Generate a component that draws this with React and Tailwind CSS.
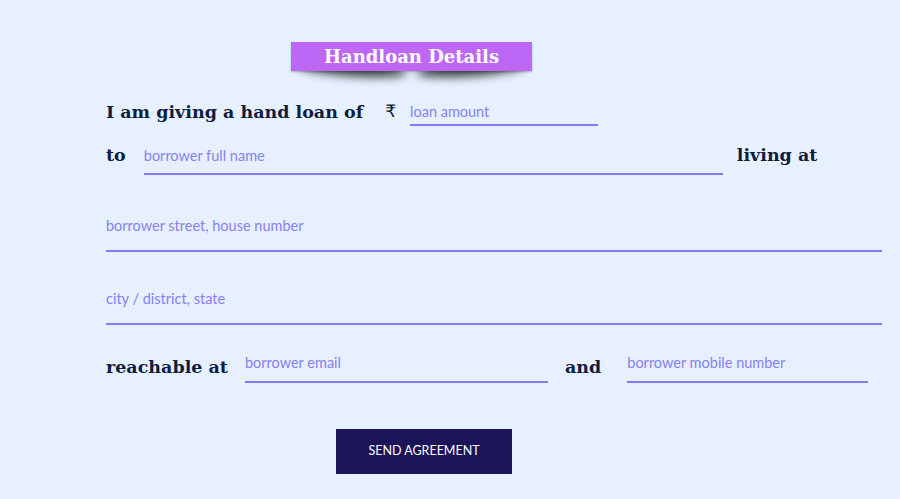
import React from "react";

const serif = { fontFamily: '"DejaVu Serif", "Liberation Serif", serif' };

function Field({ placeholder, className = "", pb = "pb-[2px]" }) {
  return (
    <input
      type="text"
      placeholder={placeholder}
      className={`bg-transparent outline-none border-0 border-b-2 border-[#817bf6] leading-[20px] text-[14.5px] text-[#3b3584] placeholder:text-[#8680f3] ${pb} ${className}`}
      style={{ fontFamily: 'Lato, "Noto Sans", sans-serif' }}
    />
  );
}

function Label({ children, className = "" }) {
  return (
    <span
      className={`text-[17.5px] leading-[26px] font-bold text-[#0e1d3e] whitespace-nowrap ${className}`}
      style={serif}
    >
      {children}
    </span>
  );
}

export default function App() {
  return (
    <div className="w-full h-[499px] bg-[#e6f0fe] overflow-hidden pl-[106px] pr-[18px] pt-[42px]">
      <div className="relative ml-[185px] w-[241px] h-[29px]">
        <div className="absolute left-[6px] bottom-[-5px] w-[110px] h-[14px] bg-black/75 blur-[5px] rounded-[50%] rotate-[4deg]" />
        <div className="absolute right-[6px] bottom-[-5px] w-[110px] h-[14px] bg-black/75 blur-[5px] rounded-[50%] rotate-[-4deg]" />
        <div className="relative flex h-full items-center justify-center bg-[#bd67f6] shadow-[0_1px_2px_rgba(0,0,0,0.25)]">
          <span className="text-[18px] font-bold text-white leading-none" style={serif}>
            Handloan Details
          </span>
        </div>
      </div>

      <div className="flex items-end mt-[27px]">
        <Label className="mb-[1px]">I am giving a hand loan of</Label>
        <span className="ml-[22px] mb-[2px] text-[17px] leading-[26px] text-[#0e1d3e]" style={{ fontFamily: '"DejaVu Sans", sans-serif' }}>₹</span>
        <Field placeholder="loan amount" className="ml-[14px] w-[188px]" />
      </div>

      <div className="flex items-end mt-[16px]">
        <Label className="mb-[7px]">to</Label>
        <Field placeholder="borrower full name" className="ml-[18px] w-[579px]" pb="pb-[7px]" />
        <Label className="ml-[14px] mb-[7px]">living at</Label>
      </div>

      <div className="mt-[38px]">
        <Field placeholder="borrower street, house number" className="w-full" pb="pb-[14px]" />
      </div>

      <div className="mt-[34px]">
        <Field placeholder="city / district, state" className="w-full" pb="pb-[14px]" />
      </div>

      <div className="flex items-end mt-[28px]">
        <Label className="mb-[3px]">reachable at</Label>
        <Field placeholder="borrower email" className="ml-[17px] w-[303px]" pb="pb-[8px]" />
        <Label className="ml-[17px] mb-[3px]">and</Label>
        <Field placeholder="borrower mobile number" className="ml-[26px] w-[241px]" pb="pb-[8px]" />
      </div>

      <button
        type="button"
        className="block mt-[46px] ml-[230px] w-[176px] h-[45px] bg-[#1c1459] text-white text-[12.5px]"
        style={{ fontFamily: 'Lato, "Noto Sans", sans-serif' }}
      >
        SEND AGREEMENT
      </button>
    </div>
  );
}
